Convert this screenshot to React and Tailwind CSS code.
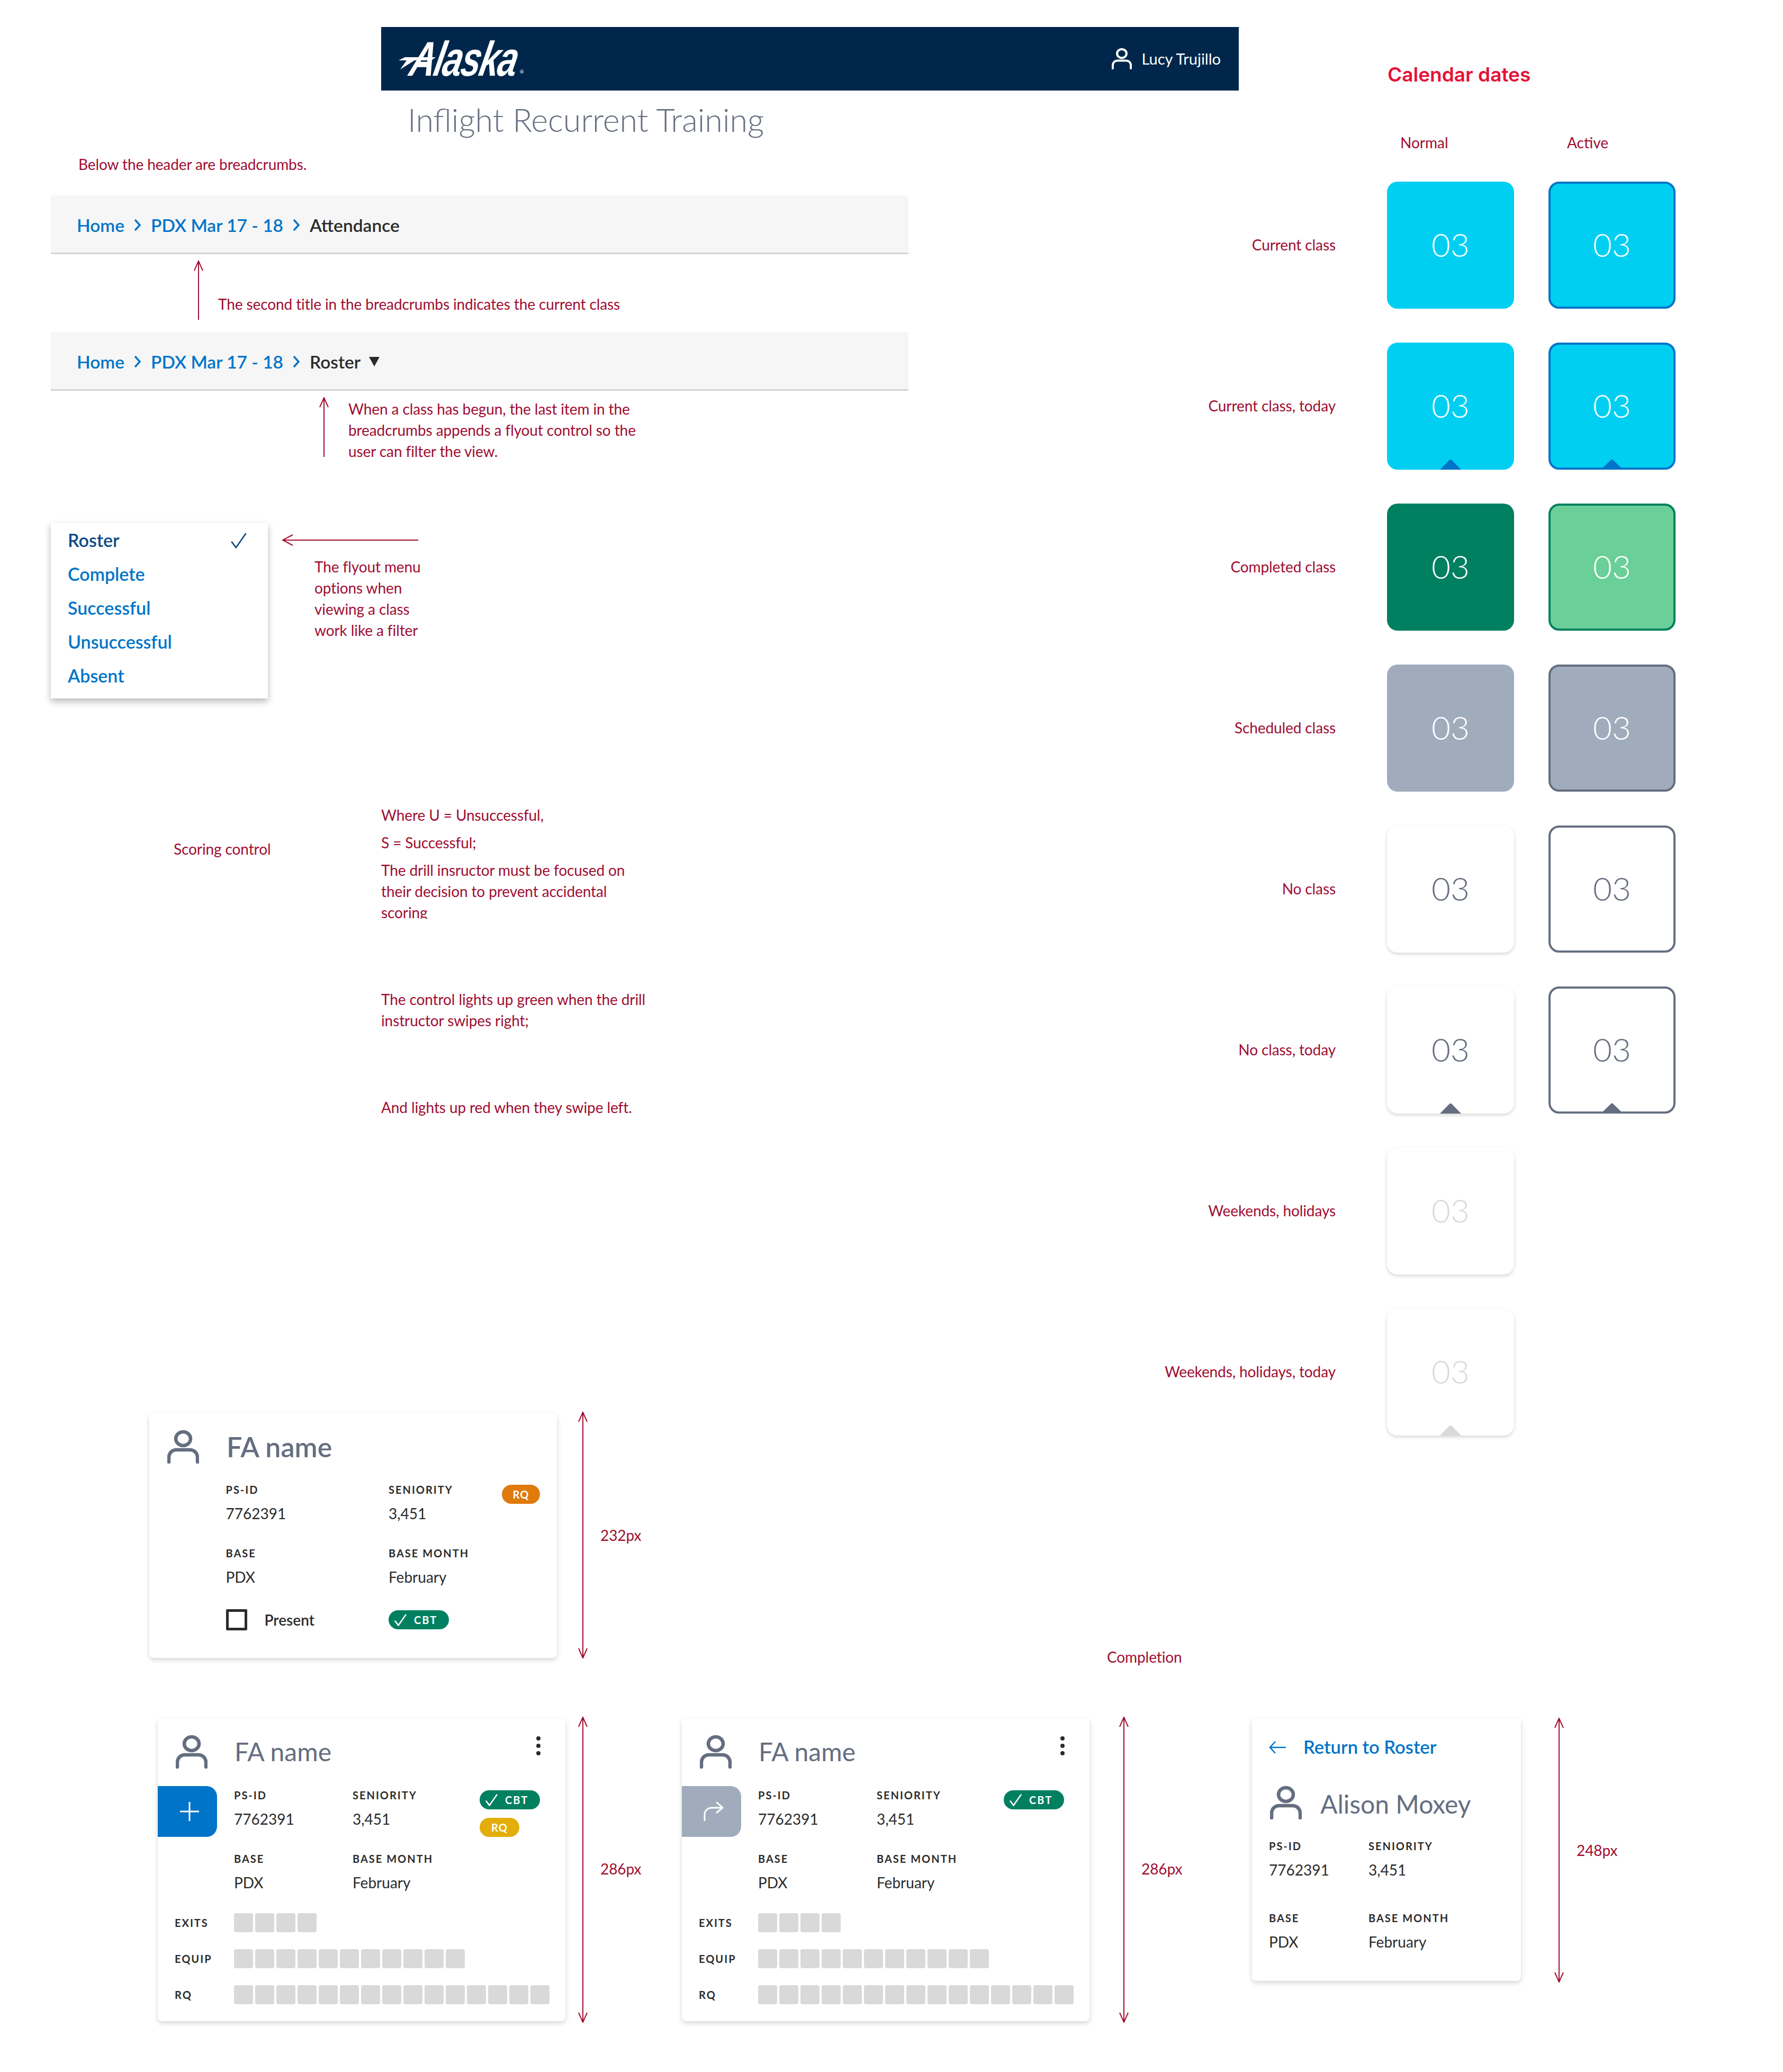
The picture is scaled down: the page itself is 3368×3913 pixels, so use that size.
const RED = '#a00c30';

function PersonIcon({ className = 'w-[60px] h-[63px]', stroke = '#656e80' }) {
    return (
        <svg viewBox="0 0 60 63" className={`${className} shrink-0`} fill="none" stroke={stroke} strokeWidth="6.500" strokeLinecap="round">
            <ellipse cx="30" cy="16" rx="14" ry="13" />
            <path d="M3 60v-8c0-9 6-15 15-15h24c9 0 15 6 15 15v8" />
        </svg>
    );
}

function CheckIcon({ className = 'w-[23px] h-[23px]', stroke = '#fff', width = 2.5 }) {
    return (
        <svg viewBox="0 0 23 23" className={`${className} shrink-0`} fill="none" stroke={stroke} strokeWidth={width} strokeLinecap="round">
            <path d="M1.5 13.5l6 8L21.5 1.5" />
        </svg>
    );
}

function VArrow({ h, up = true, down = false }) {
    return (
        <svg width="24" height={h} viewBox={`0 0 24 ${h}`} fill="none" stroke={RED} strokeWidth="2">
            <path d={`M12 0V${h}`} />
            {up && <path d="M4 19L12 1l8 18" />}
            {down && <path d={`M4 ${h - 19}L12 ${h - 1}l8 -18`} />}
        </svg>
    );
}

function Chevron() {
    return (
        <svg viewBox="0 0 14 24" className="w-[14px] h-[24px] mx-[18px] shrink-0" fill="none" stroke="#0074c8" strokeWidth="3.5">
            <path d="M2 2l9 10-9 10" />
        </svg>
    );
}

function Breadcrumbs({ last, dropdown = false, className }) {
    return (
        <div className={`absolute left-[96px] w-[1620px] h-[111px] bg-[#f6f6f6] border-b-[3px] border-[#d4d4d4] flex items-center pl-[49px] pt-[4px] text-[33.500px] font-semibold ${className}`}>
            <span className="text-[#0074c8] leading-[40px]">Home</span>
            <Chevron />
            <span className="text-[#0074c8] leading-[40px]">PDX Mar 17 - 18</span>
            <Chevron />
            <span className="text-[#2b2b2b] leading-[40px]">{last}</span>
            {dropdown && (
                <svg viewBox="0 0 20 18" className="w-[20px] h-[18px] ml-[16px]" fill="#2b2b2b">
                    <path d="M0 0h20L10 18z" />
                </svg>
            )}
        </div>
    );
}

function Note({ className, children }) {
    return <div className={`absolute -mt-[2px] text-[28px] leading-[40px] tracking-[-0.1px] text-[#a00c30] whitespace-nowrap ${className}`}>{children}</div>;
}

function Flyout() {
    const items = ['Complete', 'Successful', 'Unsuccessful', 'Absent'];
    return (
        <div className="absolute left-[96px] top-[987px] w-[410px] h-[332px] bg-white shadow-[0_6px_12px_rgba(0,0,0,0.28)] pl-[32px] text-[34px] font-semibold">
            <div className="flex items-center h-[64px] text-[#0b4a86]">
                <span>Roster</span>
                <CheckIcon className="w-[30px] h-[30px] ml-auto mr-[40px] mt-[4px]" stroke="#0b4a86" width={2} />
            </div>
            {items.map((item) => (
                <div key={item} className="flex items-center h-[64px] text-[#0074c8]">{item}</div>
            ))}
        </div>
    );
}

function Today({ color }) {
    return (
        <svg viewBox="0 0 40 20" className="absolute bottom-0 left-1/2 -translate-x-1/2 w-[40px] h-[20px]" fill={color}>
            <path d="M0 20L18 1.500q2-1.500 4 0L40 20z" />
        </svg>
    );
}

function TodayActive({ color }) {
    return (
        <svg viewBox="0 0 34 16" className="absolute bottom-0 left-1/2 -translate-x-1/2 w-[34px] h-[16px]" fill={color}>
            <path d="M0 16L15.500 1q1.500-1 3 0L34 16z" />
        </svg>
    );
}

function DateCell({ className, today, todayActive }) {
    return (
        <div className={`relative w-[240px] h-[240px] rounded-[20px] flex items-center justify-center pb-[4px] text-[62px] leading-none font-light ${className}`}>
            03
            {today && <Today color={today} />}
            {todayActive && <TodayActive color={todayActive} />}
        </div>
    );
}

function CalendarRow({ label, children }) {
    return (
        <div className="flex items-center h-[240px]">
            <div className="w-[423px] text-right text-[28px] leading-[40px] tracking-[-0.1px] -mt-[2px] text-[#a00c30]">{label}</div>
            <div className="flex gap-[65px] ml-[97px]">{children}</div>
        </div>
    );
}

function Calendar() {
    const plain = 'bg-white shadow-[0_3px_6px_rgba(0,0,0,0.16)] text-[#656e80]';
    const faded = 'bg-white shadow-[0_3px_6px_rgba(0,0,0,0.16)] text-[#d9d9d9]';
    return (
        <div className="absolute left-[2100px] top-[116px] w-[1100px]">
            <div className="pl-[521px] text-[37px] leading-[50px] font-semibold text-[#e31337] [font-family:Inter,sans-serif]">Calendar dates</div>
            <div className="flex mt-[83px] pl-[545px] text-[28px] leading-[40px] text-[#a00c30]">
                <div className="w-[315px]">Normal</div>
                <div>Active</div>
            </div>
            <div className="flex flex-col gap-[64px] mt-[54px]">
                <CalendarRow label="Current class">
                    <DateCell className="bg-[#00cff2] text-white" />
                    <DateCell className="bg-[#00cff2] text-white border-[4px] border-[#0074c8]" />
                </CalendarRow>
                <CalendarRow label="Current class, today">
                    <DateCell className="bg-[#00cff2] text-white" today="#0074c8" />
                    <DateCell className="bg-[#00cff2] text-white border-[4px] border-[#0074c8]" todayActive="#0074c8" />
                </CalendarRow>
                <CalendarRow label="Completed class">
                    <DateCell className="bg-[#008060] text-white" />
                    <DateCell className="bg-[#6acf98] text-white border-[4px] border-[#008060]" />
                </CalendarRow>
                <CalendarRow label="Scheduled class">
                    <DateCell className="bg-[#a0acbc] text-white" />
                    <DateCell className="bg-[#a0acbc] text-white border-[4px] border-[#656e80]" />
                </CalendarRow>
                <CalendarRow label="No class">
                    <DateCell className={plain} />
                    <DateCell className="bg-white text-[#656e80] border-[4px] border-[#656e80]" />
                </CalendarRow>
                <CalendarRow label="No class, today">
                    <DateCell className={plain} today="#656e80" />
                    <DateCell className="bg-white text-[#656e80] border-[4px] border-[#656e80]" todayActive="#656e80" />
                </CalendarRow>
                <CalendarRow label="Weekends, holidays">
                    <DateCell className={faded} />
                </CalendarRow>
                <CalendarRow label="Weekends, holidays, today">
                    <DateCell className={faded} today="#d9d9d9" />
                </CalendarRow>
            </div>
        </div>
    );
}

function Field({ label, value }) {
    return (
        <div>
            <div className="text-[20px] leading-[28px] font-bold tracking-[2px] text-[#2b2b2b] whitespace-nowrap">{label}</div>
            <div className="text-[28px] leading-[40px] mt-[11px] text-[#2b2b2b]">{value}</div>
        </div>
    );
}

function CbtPill() {
    return (
        <div className="flex items-center w-[114px] h-[36px] rounded-full bg-[#008060] pl-[11px] text-white">
            <CheckIcon />
            <span className="ml-[14px] text-[20px] leading-none font-bold tracking-[2px]">CBT</span>
        </div>
    );
}

function RqPill({ className }) {
    return (
        <div className={`flex items-center justify-center h-[36px] rounded-full text-white text-[20px] leading-none font-bold tracking-[1px] ${className}`}>RQ</div>
    );
}

function AttendanceCard() {
    return (
        <div className="absolute left-[282px] top-[2669px] w-[770px] h-[462px] bg-white rounded-[8px] shadow-[0_4px_10px_rgba(0,0,0,0.16)] pl-[34px] pt-[32px]">
            <div className="flex items-center">
                <PersonIcon />
                <div className="ml-[52px] -mt-[2px] text-[52px] leading-[60px] font-semibold text-[#656e80]">FA name</div>
            </div>
            <div className="grid grid-cols-[307.500px_214px_72px] gap-y-[41px] ml-[110.500px] mt-[35px]">
                <Field label="PS-ID" value="7762391" />
                <Field label="SENIORITY" value="3,451" />
                <RqPill className="w-[72px] mt-[5px] bg-[#df7a0c]" />
                <Field label="BASE" value="PDX" />
                <Field label="BASE MONTH" value="February" />
                <div />
                <div className="flex items-center h-[40px]">
                    <div className="w-[40px] h-[40px] border-[5px] border-[#2b2b2b] rounded-[2px]" />
                    <span className="ml-[33px] text-[28px] font-semibold text-[#2b2b2b]">Present</span>
                </div>
                <div className="flex items-center h-[40px]"><CbtPill /></div>
            </div>
        </div>
    );
}

function Meter({ label, count }) {
    return (
        <div className="flex items-center h-[36px]">
            <div className="w-[112px] text-[20px] font-bold tracking-[2px] text-[#2b2b2b]">{label}</div>
            <div className="flex gap-[4px]">
                {Array.from({ length: count }).map((_, i) => (
                    <div key={i} className="w-[36px] h-[36px] rounded-[4px] bg-[#d9d9d9]" />
                ))}
            </div>
        </div>
    );
}

function ScoringCard({ className, tab, pills }) {
    return (
        <div className={`absolute top-[3245px] w-[770px] h-[572px] bg-white rounded-[8px] shadow-[0_4px_10px_rgba(0,0,0,0.16)] pt-[32px] ${className}`}>
            <div className="flex items-center pl-[34px]">
                <PersonIcon />
                <div className="ml-[51px] -mt-[2px] text-[48px] leading-[60px] text-[#656e80]">FA name</div>
                <div className="flex flex-col gap-[6px] ml-auto mr-[47px] self-start mt-[2px]">
                    <div className="w-[8px] h-[8px] rounded-full bg-[#2b2b2b]" />
                    <div className="w-[8px] h-[8px] rounded-full bg-[#2b2b2b]" />
                    <div className="w-[8px] h-[8px] rounded-full bg-[#2b2b2b]" />
                </div>
            </div>
            <div className="flex mt-[33px]">
                {tab}
                <div className="grid grid-cols-[224px_240px_114px] gap-y-[41px] ml-[32px] mt-[3px]">
                    <Field label="PS-ID" value="7762391" />
                    <Field label="SENIORITY" value="3,451" />
                    <div className="row-span-2 flex flex-col gap-[16px] mt-[5px]">{pills}</div>
                    <Field label="BASE" value="PDX" />
                    <Field label="BASE MONTH" value="February" />
                </div>
            </div>
            <div className="flex flex-col gap-[32px] pl-[32px] mt-[38px]">
                <Meter label="EXITS" count={4} />
                <Meter label="EQUIP" count={11} />
                <Meter label="RQ" count={15} />
            </div>
        </div>
    );
}

function SwipeTab({ className, children }) {
    return <div className={`w-[112px] h-[96px] rounded-r-[20px] shrink-0 flex items-center justify-center pl-[8px] ${className}`}>{children}</div>;
}

function ReturnCard() {
    return (
        <div className="absolute left-[2365px] top-[3245px] w-[508px] h-[496px] bg-white rounded-[8px] shadow-[0_4px_10px_rgba(0,0,0,0.16)] pl-[32px] pt-[35px]">
            <div className="flex items-center h-[40px]">
                <svg viewBox="0 0 32 24" className="w-[32px] h-[24px]" fill="none" stroke="#0074c8" strokeWidth="2.500">
                    <path d="M32 12H2M12 1L2 12l10 11" />
                </svg>
                <span className="ml-[33px] -mt-[3px] text-[34.500px] font-semibold text-[#0074c8]">Return to Roster</span>
            </div>
            <div className="flex items-center mt-[53px] ml-[2px] h-[63px]">
                <PersonIcon />
                <div className="ml-[35px] mt-[4px] text-[48px] leading-[60px] text-[#656e80]">Alison Moxey</div>
            </div>
            <div className="grid grid-cols-[188px_188px] gap-y-[57px] mt-[36px]">
                <Field label="PS-ID" value="7762391" />
                <Field label="SENIORITY" value="3,451" />
                <Field label="BASE" value="PDX" />
                <Field label="BASE MONTH" value="February" />
            </div>
        </div>
    );
}

function AlaskaLogo() {
    return (
        <div className="relative w-[240px] h-[72px]">
            <svg viewBox="0 0 70 26" className="absolute left-0 top-[30px] w-[70px] h-[26px]" fill="#fff">
                <path d="M0 9L12 3h58l-8 6H30L3 26l12-17z" />
            </svg>
            <span className="absolute left-[24px] top-[-14px] text-[92px] leading-[100px] font-bold italic text-white tracking-[-3px] [font-family:'Liberation_Sans',sans-serif] origin-left scale-x-[0.72] -skew-x-[16deg]">Alaska</span>
            <span className="absolute left-[229px] top-[56px] text-[9px] leading-none text-white">®</span>
        </div>
    );
}

export default function App() {
    return (
        <div className="relative w-[3368px] h-[3913px] bg-white overflow-hidden [font-family:Lato,sans-serif]">
            {/* Header */}
            <div className="absolute left-[720px] top-[51px] w-[1620px] h-[120px] bg-[#00274b] flex items-center pl-[33px] pr-[34px]">
                <AlaskaLogo />
                <div className="flex items-center ml-auto text-white text-[29px]">
                    <PersonIcon className="w-[38px] h-[40px]" stroke="#fff" />
                    <span className="ml-[18px]">Lucy Trujillo</span>
                </div>
            </div>
            <div className="absolute left-[770px] top-[186px] text-[61px] leading-[80px] font-light text-[#656e80] whitespace-nowrap">Inflight Recurrent Training</div>

            {/* Breadcrumb notes */}
            <Note className="left-[148px] top-[292px]">Below the header are breadcrumbs.</Note>
            <Breadcrumbs className="top-[369px]" last="Attendance" />
            <div className="absolute left-[363px] top-[492px]"><VArrow h={112} /></div>
            <Note className="left-[412px] top-[556px]">The second title in the breadcrumbs indicates the current class</Note>
            <Breadcrumbs className="top-[627px]" last="Roster" dropdown />
            <div className="absolute left-[600px] top-[750px]"><VArrow h={113} /></div>
            <Note className="left-[658px] top-[754px]">
                When a class has begun, the last item in the<br />
                breadcrumbs appends a flyout control so the<br />
                user can filter the view.
            </Note>

            {/* Flyout */}
            <Flyout />
            <svg width="258" height="24" viewBox="0 0 258 24" className="absolute left-[532px] top-[1008px]" fill="none" stroke={RED} strokeWidth="2">
                <path d="M2 12h256M21 2L2 12l19 10" />
            </svg>
            <Note className="left-[594px] top-[1052px]">
                The flyout menu<br />
                options when<br />
                viewing a class<br />
                work like a filter
            </Note>

            {/* Scoring control */}
            <Note className="left-[328px] top-[1585px]">Scoring control</Note>
            <Note className="left-[720px] top-[1521px]">Where U = Unsuccessful,</Note>
            <Note className="left-[720px] top-[1573px]">S = Successful;</Note>
            <Note className="left-[720px] top-[1625px] h-[112px] overflow-hidden">
                The drill insructor must be focused on<br />
                their decision to prevent accidental<br />
                scoring
            </Note>
            <Note className="left-[720px] top-[1869px]">
                The control lights up green when the drill<br />
                instructor swipes right;
            </Note>
            <Note className="left-[720px] top-[2073px]">And lights up red when they swipe left.</Note>

            <Calendar />

            {/* Attendance and scoring cards */}
            <AttendanceCard />
            <div className="absolute left-[1089px] top-[2666px]"><VArrow h={466} down /></div>
            <Note className="left-[1134px] top-[2881px]">232px</Note>
            <Note className="left-[2091px] top-[3111px]">Completion</Note>

            <ScoringCard
                className="left-[298px]"
                tab={
                    <SwipeTab className="bg-[#0074c8]">
                        <svg viewBox="0 0 36 36" className="w-[36px] h-[36px]" fill="none" stroke="#fff" strokeWidth="3">
                            <path d="M18 0v36M0 18h36" />
                        </svg>
                    </SwipeTab>
                }
                pills={
                    <>
                        <CbtPill />
                        <RqPill className="w-[75px] bg-[#e3ae09]" />
                    </>
                }
            />
            <div className="absolute left-[1089px] top-[3242px]"><VArrow h={578} down /></div>
            <Note className="left-[1134px] top-[3511px]">286px</Note>

            <ScoringCard
                className="left-[1288px]"
                tab={
                    <SwipeTab className="bg-[#a0acbc]">
                        <svg viewBox="0 0 38 36" className="w-[38px] h-[36px]" fill="none" stroke="#fff" strokeWidth="3" strokeLinecap="round">
                            <path d="M2 35V24C2 16 8 11 16 11h20M25 1l11 10-11 9" />
                        </svg>
                    </SwipeTab>
                }
                pills={<CbtPill />}
            />
            <div className="absolute left-[2111px] top-[3242px]"><VArrow h={578} down /></div>
            <Note className="left-[2156px] top-[3511px]">286px</Note>

            <ReturnCard />
            <div className="absolute left-[2933px] top-[3244px]"><VArrow h={500} down /></div>
            <Note className="left-[2978px] top-[3476px]">248px</Note>
        </div>
    );
}
